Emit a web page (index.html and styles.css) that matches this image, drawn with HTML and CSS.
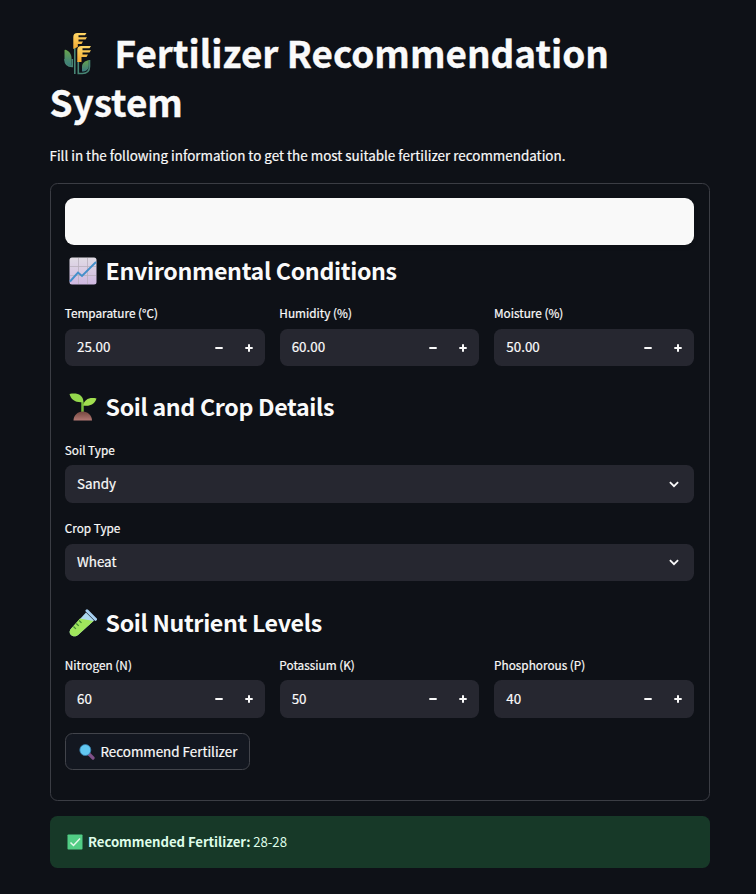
FILE: index.html
```
<!DOCTYPE html>
<html lang="en">
<head>
<meta charset="utf-8">
<title>Fertilizer Recommendation System</title>
<link rel="stylesheet" href="styles.css">
</head>
<body>
<svg class="defs" width="0" height="0" aria-hidden="true">
  <defs>
    <symbol id="minus" viewBox="0 0 8 8"><path d="M.3 3h7.400v2H.3z"/></symbol>
    <symbol id="plus" viewBox="0 0 8 8"><path d="M3 .3h2V3h2.700v2H5v2.700H3V5H.3V3H3z"/></symbol>
    <symbol id="chevron" viewBox="0 0 10 7"><path d="M.9 1.200 5 5.200l4.100-4" fill="none" stroke="currentColor" stroke-width="1.800"/></symbol>
  </defs>
</svg>
<main class="page">
  <h1 class="title">
    <svg class="title-icon" viewBox="0 0 30 44" aria-hidden="true">
      <defs>
        <linearGradient id="leaf" x1="0" y1="0" x2="0" y2="1"><stop offset="0" stop-color="#68a34c"/><stop offset="1" stop-color="#397b82"/></linearGradient>
        <linearGradient id="grain" x1="0" y1="0" x2="0" y2="1"><stop offset="0" stop-color="#ffd765"/><stop offset="1" stop-color="#f2a932"/></linearGradient>
      </defs>
      <path d="M1.500 18.500q0-1 1-.7C6 19 8.500 22 8.500 26v8C4 33.500 1.500 31 1.500 27z" fill="url(#leaf)"/>
      <path d="M25.800 28c-4 1-6.800 3-6.800 7v4.500c4 0 6.800-2 6.800-6z" fill="url(#leaf)"/>
      <path d="M11.800 16v26M15.300 29v12.500h4c5 0 7.200-3 7.200-7V28M2 27c0 5 3 7.500 7.300 7.500V27" fill="none" stroke="#478574" stroke-width="1.600"/>
      <path d="M10.300 17V5q0-4 4-4h9.200l-1.500 2.200h-6.500v2H24L22.500 7.500h-7v2H20L18.500 12h-3.700v3z" fill="url(#grain)"/>
      <path d="M14.300 30V18q0-4 4-4H28l-1.500 2.200h-7v2H28l-1.500 2.300h-7v2H25L23.500 25h-5v5z" fill="url(#grain)"/>
    </svg><span>Fertilizer Recommendation</span><br><span class="title-second">System</span>
  </h1>
  <p class="intro">Fill in the following information to get the most suitable fertilizer recommendation.</p>

  <form class="form">
    <div class="card"></div>

    <h3 class="heading">
      <svg class="heading-icon" viewBox="0 0 28 28" aria-hidden="true">
        <defs><linearGradient id="chart" x1="0" y1="0" x2="0" y2="1"><stop offset="0" stop-color="#e1dce5"/><stop offset="1" stop-color="#cfb8e1"/></linearGradient></defs>
        <rect x=".5" y=".5" width="27" height="27" rx="2.500" fill="url(#chart)"/>
        <path d="M9.500 1v26M18.500 1v26M1 9.500h26M1 18.500h26" stroke="#b9b0bd" stroke-width=".8"/>
        <path d="M1 24.500 9 15.500l4 3.500L27 5" fill="none" stroke="#438fca" stroke-width="1.900"/>
      </svg><span>Environmental Conditions</span>
    </h3>
    <div class="columns">
      <div class="field"><label>Temparature (°C)</label><div class="input"><span>25.00</span><svg class="step"><use href="#minus"/></svg><svg class="step"><use href="#plus"/></svg></div></div>
      <div class="field"><label>Humidity (%)</label><div class="input"><span>60.00</span><svg class="step"><use href="#minus"/></svg><svg class="step"><use href="#plus"/></svg></div></div>
      <div class="field"><label>Moisture (%)</label><div class="input"><span>50.00</span><svg class="step"><use href="#minus"/></svg><svg class="step"><use href="#plus"/></svg></div></div>
    </div>

    <h3 class="heading heading-soil">
      <svg class="heading-icon" viewBox="0 0 28 28" aria-hidden="true">
        <defs><linearGradient id="soil" x1="0" y1="0" x2="0" y2="1"><stop offset="0" stop-color="#74473f"/><stop offset="1" stop-color="#b37974"/></linearGradient></defs>
        <path d="M13.500 20V9" stroke="#75bb3b" stroke-width="2.500"/>
        <path d="M.5 1C8-.5 14 1.500 14.500 9 7 10 2 7 .5 1z" fill="#94d84d"/>
        <path d="M27.500 5.500C25.500 11.500 21 13.500 14 12.500 15.500 6.500 20 4 27.500 5.500z" fill="#a2df50"/>
        <path d="M4.500 27.500c0-5 4-9 9.200-9s9.300 4 9.300 9z" fill="url(#soil)"/>
      </svg><span>Soil and Crop Details</span>
    </h3>
    <div class="field field-soil"><label>Soil Type</label><div class="input tall"><span>Sandy</span><svg class="chevron"><use href="#chevron"/></svg></div></div>
    <div class="field field-crop"><label>Crop Type</label><div class="input"><span>Wheat</span><svg class="chevron"><use href="#chevron"/></svg></div></div>

    <h3 class="heading heading-nutrient">
      <svg class="heading-icon" viewBox="0 0 28 28" aria-hidden="true">
        <path d="m17 3.500 8 8L9 26c-2 1.800-5 1.800-7 0s-1.700-4.500.2-6.500z" fill="#acd8f0"/>
        <path d="m11 9.500 13.500 2.500L9 26c-2 1.800-5 1.800-7 0s-1.700-4.500.2-6.500z" fill="#a0e65c"/>
        <path d="m18 1.800 8.500 8.500" stroke="#a7d1f3" stroke-width="3" stroke-linecap="round"/>
        <path d="m4.500 17.500 2.400 2.400m.4-5.400 2.400 2.400m.4-5.400 2.400 2.400" stroke="#438b34" stroke-width="1.300"/>
      </svg><span>Soil Nutrient Levels</span>
    </h3>
    <div class="columns columns-nutrient">
      <div class="field"><label>Nitrogen (N)</label><div class="input tall"><span>60</span><svg class="step"><use href="#minus"/></svg><svg class="step"><use href="#plus"/></svg></div></div>
      <div class="field"><label>Potassium (K)</label><div class="input tall"><span>50</span><svg class="step"><use href="#minus"/></svg><svg class="step"><use href="#plus"/></svg></div></div>
      <div class="field"><label>Phosphorous (P)</label><div class="input tall"><span>40</span><svg class="step"><use href="#minus"/></svg><svg class="step"><use href="#plus"/></svg></div></div>
    </div>
    <button class="submit" type="button">
      <svg class="small-icon" viewBox="0 0 16 16" aria-hidden="true"><path d="m10 10 4 4" stroke="#805088" stroke-width="3.200" stroke-linecap="round"/><circle cx="6.300" cy="6" r="5.500" fill="#62c7f1" stroke="#367ca9" stroke-width=".8"/></svg><span>Recommend Fertilizer</span>
    </button>
  </form>

  <div class="alert">
    <svg class="small-icon" viewBox="0 0 16 16" aria-hidden="true"><rect x=".5" y=".5" width="15" height="15" rx=".8" fill="#52cd85"/><path d="m3.500 8.500 3 3 6.500-7" fill="none" stroke="#e4f8ea" stroke-width="1.500"/></svg><span><strong>Recommended Fertilizer:</strong> 28-28</span>
  </div>
</main>
</body>
</html>
```
FILE: styles.css
```
* { box-sizing: border-box; }
body {
  margin: 0;
  background: #0e1117;
  color: #fafafa;
  font-family: "Noto Sans CJK JP", "Noto Sans", sans-serif;
  font-size: 13.400px;
  line-height: 22px;
  -webkit-text-stroke: .2px currentColor;
}
.defs { position: absolute; }
.page { display: flow-root; width: 660px; margin: 0 auto 0 50px; }
.title { height: 98px; margin: 28px 0 0; font-size: 36.900px; line-height: 49px; font-weight: 700; white-space: nowrap; -webkit-text-stroke: .35px currentColor; }
.title-icon { width: 30px; height: 44px; margin: 0 22px 0 12.500px; vertical-align: -8px; }
.title-second { margin-left: -.5px; }
.intro { margin: 18px 0 17px -.5px; height: 22px; font-size: 13.430px; white-space: nowrap; }
.form { height: 618px; padding: 14px 15px 0 14px; border: 1px solid #3b3d44; border-radius: 7.500px; }
.card { height: 47px; background: #f9f9f9; border-radius: 9px; box-shadow: 0 2px 5px rgb(0 0 0 / 10%); }
.heading { display: flex; align-items: center; height: 34px; margin: 9px 0 17px; font-size: 23.200px; line-height: 32px; font-weight: 700; letter-spacing: -.33px; -webkit-text-stroke: 0; white-space: nowrap; }
.heading span { height: 34px; }
.heading-icon { width: 28px; height: 28px; margin: 0 8.500px 0 4px; }
.heading-soil { margin: 24px 0 18px; }
.heading-nutrient { margin: 25px 0 17px; }
.columns { display: grid; grid-template-columns: repeat(3, 1fr); gap: 15px; }
.field label { display: block; height: 16px; margin: 0 0 7px -.3px; font-size: 11.800px; line-height: 16px; white-space: nowrap; }
.columns label { margin-bottom: 8px; }
.columns-nutrient label { margin-bottom: 7px; }
.input { display: flex; align-items: center; height: 37px; padding: 0 12px; background: #262730; border-radius: 7.500px; }
.input span { margin-right: auto; padding-bottom: 3px; }
.tall { height: 38px; }
.step { width: 8px; height: 8px; fill: currentColor; }
.step + .step { margin-left: 22px; }
.chevron { width: 10px; height: 7px; margin-right: 3px; }
.field-crop { margin-top: 17px; }
.field-crop label { margin-bottom: 8px; }
.submit { display: flex; align-items: center; width: 185px; height: 37px; margin-top: 15px; padding: 0 0 0 13px; border: 1px solid #42444b; border-radius: 7.500px; background: #131720; color: inherit; font: inherit; white-space: nowrap; }
.submit span { padding-bottom: 2px; margin-left: .5px; }
.small-icon { width: 16px; height: 16px; margin-right: 5px; flex: none; }
.alert { display: flex; align-items: center; height: 52px; margin-top: 15px; padding-left: 17px; border-radius: 7.500px; background: #173928; color: #dffde9; font-size: 13.200px; white-space: nowrap; -webkit-text-stroke: 0; }
.alert span { padding-bottom: 1px; letter-spacing: -.05px; }
```
